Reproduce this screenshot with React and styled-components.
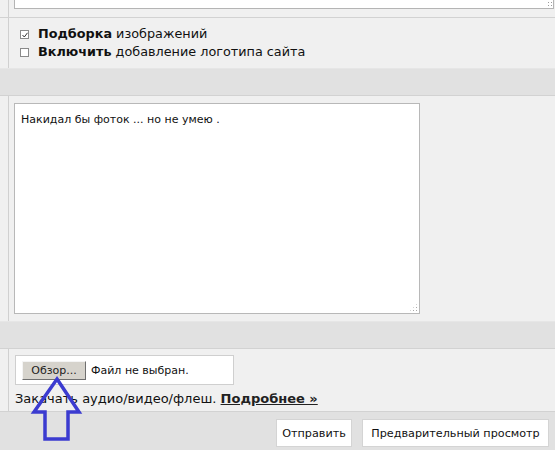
import React from 'react';
import styled, { createGlobalStyle } from 'styled-components';

const GlobalStyle = createGlobalStyle`
  body {
    margin: 0;
    background: #f0f0f0;
    font-family: "DejaVu Sans", Verdana, sans-serif;
    color: #111;
  }
`;

const App = () => (
  <Page>
    <GlobalStyle />
    <Row>
      <Gutter />
      <Cell $pad="0 1px 8px 5px">
        <TextTail />
      </Cell>
    </Row>
    <Row>
      <Gutter />
      <Cell $pad="7px 0 7px 11px">
        <Option>
          <Box>
            <svg width="6" height="6" viewBox="0 0 6 6">
              <path d="M0.5 3 L2.3 5 L5.5 0.8" fill="none" stroke="#333" strokeWidth="1" />
            </svg>
          </Box>
          <b>Подборка</b>&nbsp;изображений
        </Option>
        <Option>
          <Box />
          <b>Включить</b>&nbsp;добавление логотипа сайта
        </Option>
      </Cell>
    </Row>
    <Band />
    <Row>
      <Gutter />
      <Cell $pad="7px 5px 7px 5px">
        <MessageWrap>
          <Message defaultValue="Накидал бы фоток ... но не умею ." />
        </MessageWrap>
      </Cell>
    </Row>
    <Band />
    <Row>
      <Gutter />
      <Cell $pad="6px 5px 3px 6px">
        <FileField>
          <BrowseButton>Обзор...</BrowseButton>
          <FileName>Файл не выбран.</FileName>
        </FileField>
        <UploadNote>
          Закачать аудио/видео/флеш. <a href="/">Подробнее »</a>
        </UploadNote>
      </Cell>
    </Row>
    <Actions>
      <Button $w={76}>Отправить</Button>
      <Button $w={187}>Предварительный просмотр</Button>
    </Actions>
    <Pointer width="50" height="70" viewBox="0 0 50 70">
      <path
        d="M24 2 L46 35 L35 35 L35 62 L12 62 L12 35 L1 35 Z"
        fill="none"
        stroke="#3b3bd0"
        strokeWidth="3.5"
        strokeLinejoin="miter"
      />
    </Pointer>
  </Page>
);

export default App;

const Page = styled.div`
  position: relative;
  min-height: 450px;
  background: #f0f0f0;
`;

const Row = styled.div`
  display: grid;
  grid-template-columns: 8px 1fr;
  border-top: 1px solid #d2d2d2;
  &:first-of-type {
    border-top: none;
  }
`;

const Gutter = styled.div``;

const Cell = styled.div`
  border-left: 1px solid #d0d0d0;
  padding: ${(p) => p.$pad};
`;

const TextTail = styled.div`
  position: relative;
  height: 8px;
  background: #fff;
  border: 1px solid #b4b4b4;
  border-top: none;
  &::after {
    content: "";
    position: absolute;
    right: 0;
    bottom: 0;
    width: 6px;
    height: 7px;
    background: radial-gradient(circle, #9a9a9a 0.8px, transparent 1px) 0 0 / 3px 3px;
  }
`;

const Option = styled.div`
  display: flex;
  align-items: center;
  font-size: 12.8px;
  line-height: 18px;
  & b {
    font-weight: bold;
  }
`;

const Box = styled.span`
  display: inline-flex;
  align-items: center;
  justify-content: center;
  width: 7px;
  height: 7px;
  border: 1px solid #8a8a8a;
  background: #fff;
  margin-right: 9px;
  margin-top: 1px;
`;

const Band = styled.div`
  height: 26px;
  background: #e1e1e1;
  border-top: 1px solid #e6e6e6;
`;

const MessageWrap = styled.div`
  position: relative;
  width: 406px;
  &::after {
    content: "";
    position: absolute;
    right: 2px;
    bottom: 2px;
    width: 9px;
    height: 9px;
    background: radial-gradient(circle, #a8a8a8 0.8px, transparent 1px) 0 0 / 3px 3px;
    clip-path: polygon(100% 0, 100% 100%, 0 100%);
    pointer-events: none;
  }
`;

const Message = styled.textarea`
  display: block;
  box-sizing: border-box;
  width: 406px;
  height: 211px;
  margin: 0;
  padding: 9px 6px 7px;
  border: 1px solid #b8b8b8;
  background: #fff;
  font-family: "DejaVu Sans", Tahoma, sans-serif;
  font-size: 11px;
  color: #111;
  outline: none;
  resize: none;
`;

const FileField = styled.div`
  display: flex;
  align-items: center;
  box-sizing: border-box;
  width: 219px;
  height: 30px;
  padding: 0 6px;
  background: #fff;
  border: 1px solid #cfcfcf;
  font-family: "DejaVu Sans", Tahoma, sans-serif;
  font-size: 11px;
`;

const BrowseButton = styled.span`
  display: inline-flex;
  align-items: center;
  justify-content: center;
  box-sizing: border-box;
  width: 64px;
  height: 19px;
  background: #d6d3cc;
  border: 1px solid;
  border-color: #f4f4f4 #6f6f6f #6f6f6f #f4f4f4;
  color: #222;
`;

const FileName = styled.span`
  margin-left: 5px;
`;

const UploadNote = styled.div`
  margin-top: 5px;
  font-size: 13px;
  line-height: 18px;
  & a {
    color: #222;
    font-weight: bold;
    text-decoration: underline;
  }
`;

const Actions = styled.div`
  display: flex;
  justify-content: flex-end;
  gap: 10px;
  padding: 7px 6px 7px 0;
  background: #e1e1e1;
  border-top: 1px solid #d2d2d2;
`;

const Button = styled.button`
  box-sizing: border-box;
  width: ${(p) => p.$w}px;
  height: 28px;
  padding: 0;
  background: #fff;
  border: 1px solid #d4d4d4;
  font-family: "DejaVu Sans", Tahoma, sans-serif;
  font-size: 11.2px;
  color: #111;
  white-space: nowrap;
`;

const Pointer = styled.svg`
  position: absolute;
  left: 33px;
  top: 377px;
  overflow: visible;
`;
